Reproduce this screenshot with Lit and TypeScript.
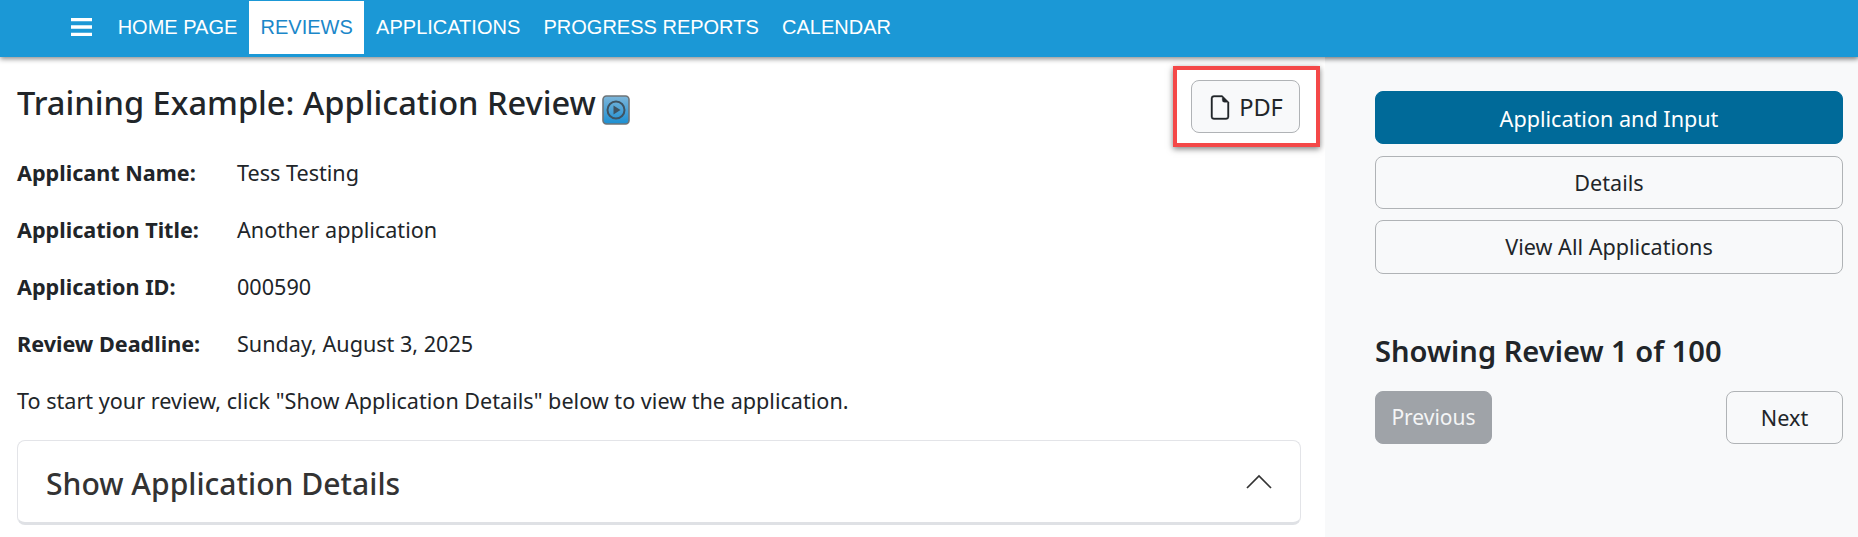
import { LitElement, html, css } from "lit";
import { customElement } from "lit/decorators.js";

@customElement("app-root")
export class AppRoot extends LitElement {
  static styles = css`
    :host { display: block; width: 1858px; height: 537px; overflow: hidden; background: #fff; color: #212529; font-family: "Noto Sans", sans-serif; font-size: 21.6px; }
    * { box-sizing: border-box; }
    .nav { position: relative; z-index: 2; height: 57px; background: #1b98d6; box-shadow: 0 2px 5px rgba(0,0,0,.45); display: flex; align-items: stretch; padding: 1px 0 3px 71px; font-family: "Liberation Sans", Arial, sans-serif; font-size: 20px; }
    .burger { width: 21px; margin-right: 14px; align-self: center; display: block; margin-top: -2px; }
    .tab { display: flex; align-items: center; padding: 0 11.65px; color: #fff; }
    .tab.active { background: #fff; color: #1b87c9; }
    .body { display: grid; grid-template-columns: 1325px 533px; height: 480px; }
    .main { padding: 9px 24px 0 17px; }
    .head { display: flex; justify-content: space-between; align-items: center; margin-right: -19px; height: 81px; margin-bottom: 11px; }
    h1 { margin: 0; font-size: 32.6px; font-weight: 500; line-height: 40px; display: flex; align-items: center; gap: 6px; margin-top: -8px; }
    .play { width: 28px; height: 30px; display: block; margin-top: 14px; }
    .mark { border: 4px solid #f44848; padding: 10px 16px 9px 14px; box-shadow: 0 2px 6px rgba(0,0,0,.5); height: 81px; background: #fff; }
    .btn { display: flex; align-items: center; justify-content: center; height: 53.4px; border: 1px solid #b0b3b6; border-radius: 8px; background: #f8f9fa; color: #212529; font-size: 21.6px; }
    .pdf { width: 109px; gap: 7px; font-size: 23.6px; padding-top: 1px; }
    .pdf svg { width: 24px; height: 25px; display: block; }
    .row { display: grid; grid-template-columns: 220px 1fr; line-height: 30px; margin-bottom: 27px; }
    .row b { font-weight: 700; }
    p { margin: 0 0 24px; line-height: 30px; }
    .card { height: 85px; width: 1284px; border: 1px solid #e3e4e8; border-bottom: 3px solid #dfe1e5; border-radius: 8px; display: flex; align-items: center; justify-content: space-between; padding: 4px 28px 0; font-size: 30.1px; font-weight: 500; color: #333; }
    .card svg { width: 26px; height: 15px; display: block; margin-top: -4px; }
    .side { background: #f8f9fa; padding: 34px 15px 0 50px; box-shadow: inset 0 6px 5px -5px rgba(0,0,0,.15); }
    .stack { display: flex; flex-direction: column; gap: 11.2px; }
    .primary { background: #006a99; border-color: #006a99; color: #fff; padding-top: 1px; }
    h2 { margin: 57px 0 0; font-size: 29.1px; font-weight: 600; line-height: 40px; }
    .pager { display: flex; justify-content: space-between; margin-top: 20px; }
    .prev { width: 117px; background: #9fa3a8; border-color: #9fa3a8; color: #f4f5f6; font-size: 21px; }
    .next { width: 117px; }
  `;

  render() {
    return html`
      <div class="nav">
        <svg class="burger" viewBox="0 0 21 18"><path d="M0 1.5h21M0 9h21M0 16.5h21" stroke="#fff" stroke-width="3.4" fill="none" /></svg>
        ${["HOME PAGE", "REVIEWS", "APPLICATIONS", "PROGRESS REPORTS", "CALENDAR"].map(
          (t) => html`<div class="tab ${t === "REVIEWS" ? "active" : ""}">${t}</div>`
        )}
      </div>
      <div class="body">
        <div class="main">
          <div class="head">
            <h1>
              Training Example: Application Review
              <svg class="play" viewBox="0 0 28 30">
                <defs><linearGradient id="g" x1="0" y1="0" x2="0" y2="1"><stop offset="0" stop-color="#7db6da" /><stop offset="1" stop-color="#1b8fd2" /></linearGradient></defs>
                <rect x="1" y="1" width="26" height="28" rx="3.5" fill="url(#g)" stroke="#6e7478" stroke-width="1.6" />
                <circle cx="14" cy="15" r="8.5" fill="none" stroke="#3f5361" stroke-width="2" />
                <path d="M11.5 10.5l7 4.5-7 4.5z" fill="#3f5361" />
              </svg>
            </h1>
            <div class="mark">
              <div class="btn pdf">
                <svg viewBox="0 0 16 16"><path fill="#212529" stroke="#212529" stroke-width=".25" d="M14 4.5V14a2 2 0 0 1-2 2H4a2 2 0 0 1-2-2V2a2 2 0 0 1 2-2h5.5L14 4.5zm-3 0A1.5 1.5 0 0 1 9.5 3V1H4a1 1 0 0 0-1 1v12a1 1 0 0 0 1 1h8a1 1 0 0 0 1-1V4.5h-2z" /></svg>
                PDF
              </div>
            </div>
          </div>
          <div class="row"><b>Applicant Name:</b><span>Tess Testing</span></div>
          <div class="row"><b>Application Title:</b><span>Another application</span></div>
          <div class="row"><b>Application ID:</b><span>000590</span></div>
          <div class="row"><b>Review Deadline:</b><span>Sunday, August 3, 2025</span></div>
          <p>To start your review, click "Show Application Details" below to view the application.</p>
          <div class="card">
            Show Application Details
            <svg viewBox="0 0 26 15"><path d="M1 14L13 2l12 12" fill="none" stroke="#333" stroke-width="1.7" /></svg>
          </div>
        </div>
        <div class="side">
          <div class="stack">
            <div class="btn primary">Application and Input</div>
            <div class="btn">Details</div>
            <div class="btn">View All Applications</div>
          </div>
          <h2>Showing Review 1 of 100</h2>
          <div class="pager">
            <div class="btn prev">Previous</div>
            <div class="btn next">Next</div>
          </div>
        </div>
      </div>
    `;
  }
}
